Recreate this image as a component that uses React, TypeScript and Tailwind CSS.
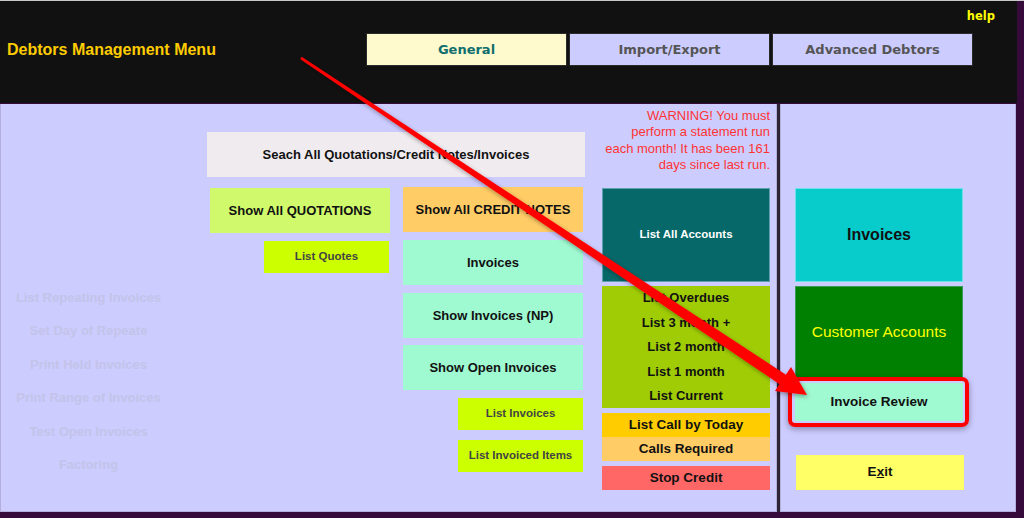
import React from "react";

const sans = { fontFamily: '"Liberation Sans", Arial, sans-serif' };
const dv = { fontFamily: '"DejaVu Sans", Verdana, sans-serif' };

function Btn({
  className,
  children,
}: {
  className: string;
  children: React.ReactNode;
}) {
  return (
    <div className={"flex items-center justify-center text-center " + className}>
      {children}
    </div>
  );
}

export default function App() {
  const faded = [
    "List Repeating Invoices",
    "Set Day of Repeate",
    "Print Held Invoices",
    "Print Range of Invoices",
    "Test Open Invoices",
    "Factoring",
  ];
  const overdue = ["List Overdues", "List 3 month +", "List 2 month", "List 1 month", "List Current"];
  return (
    <div className="relative w-[1024px] h-[518px] bg-[#360b3b] overflow-hidden" style={sans}>
      <div className="h-px w-full bg-[#c8c8c8]" />
      {/* Header */}
      <div className="w-[1017px] h-[102px] bg-[#111111] flex flex-col">
        <div className="h-[32px] flex items-center justify-end pr-[22px]">
          <span className="text-[11.5px] font-bold text-[#ffff00]" style={dv}>
            help
          </span>
        </div>
        <div className="flex items-center h-[33px]">
          <div className="w-[366px] pl-[7px] text-[16px] font-bold text-[#ffcc00] leading-none">
            Debtors Management Menu
          </div>
          <div className="flex gap-[2px]" style={dv}>
            <div className="w-[201px] h-[33px] flex items-center justify-center bg-[#fffacd] border border-[#2a2a2a] text-[13px] font-bold text-[#106e6e]">
              General
            </div>
            <div className="w-[201px] h-[33px] flex items-center justify-center bg-[#ccccff] border border-[#2a2a2a] text-[13px] font-bold text-[#555555]">
              Import/Export
            </div>
            <div className="w-[201px] h-[33px] flex items-center justify-center bg-[#ccccff] border border-[#2a2a2a] text-[13px] font-bold text-[#555555]">
              Advanced Debtors
            </div>
          </div>
        </div>
      </div>
      {/* Body */}
      <div className="flex mt-px h-[408px]">
        {/* Left panel */}
        <div className="w-[777px] h-full bg-[#ccccff] border-l border-r border-b border-[#b3aedb] flex items-start">
          <div className="w-[175px] pt-[177px] flex flex-col items-center">
            {faded.map((t) => (
              <div key={t} className="h-[33.4px] flex items-center text-[13px] font-bold text-[#c4c3e9] whitespace-nowrap">
                {t}
              </div>
            ))}
          </div>
          <div className="ml-[31px] w-[378px] pt-[28px] flex flex-col">
            <Btn className="h-[45px] w-full bg-[#efebef] text-[13px] font-bold text-[#111]">
              Seach All Quotations/Credit Notes/Invoices
            </Btn>
            <div className="flex">
              <div className="ml-[3px] w-[180px] flex flex-col items-end">
                <Btn className="mt-[11px] h-[45px] w-full bg-[#d0fa6c] text-[13px] font-bold text-[#111]">
                  Show All QUOTATIONS
                </Btn>
                <Btn className="mt-[8px] mr-[1px] h-[32px] w-[125px] bg-[#ccff00] text-[11.5px] font-bold text-[#444]">
                  List Quotes
                </Btn>
              </div>
              <div className="ml-[13px] w-[180px] flex flex-col items-end">
                <Btn className="mt-[10px] h-[45px] w-full bg-[#ffcc66] text-[13px] font-bold text-[#111]">
                  Show All CREDIT NOTES
                </Btn>
                <Btn className="mt-[8px] h-[45px] w-full bg-[#9ff9d1] text-[13px] font-bold text-[#111]">
                  Invoices
                </Btn>
                <Btn className="mt-[8px] h-[45px] w-full bg-[#9ff9d1] text-[13px] font-bold text-[#111]">
                  Show Invoices (NP)
                </Btn>
                <Btn className="mt-[7px] h-[45px] w-full bg-[#9ff9d1] text-[13px] font-bold text-[#111]">
                  Show Open Invoices
                </Btn>
                <Btn className="mt-[8px] h-[32px] w-[125px] bg-[#ccff00] text-[11.5px] font-bold text-[#444]">
                  List Invoices
                </Btn>
                <Btn className="mt-[10px] h-[32px] w-[125px] bg-[#ccff00] text-[11.5px] font-bold text-[#444]">
                  List Invoiced Items
                </Btn>
              </div>
            </div>
          </div>
          <div className="ml-[17px] w-[168px] pt-[4px] flex flex-col">
            <div className="h-[80px] text-right text-[13px] leading-[16.4px] text-[#ff3333] whitespace-nowrap">
              WARNING! You must
              <br />
              perform a statement run
              <br />
              each month! It has been 161
              <br />
              days since last run.
            </div>
            <Btn className="h-[94px] w-full bg-[#066868] border border-[#5f9fae] text-[11.5px] font-bold text-white">
              List All Accounts
            </Btn>
            <div className="mt-[4px] h-[122px] w-full bg-[#a0cc06] flex flex-col items-center">
              {overdue.map((t) => (
                <div key={t} className="h-[24.4px] flex items-center text-[13px] font-bold text-[#111]">
                  {t}
                </div>
              ))}
            </div>
            <Btn className="mt-[5px] h-[24px] w-full bg-[#ffcc00] text-[13.5px] font-bold text-[#111]">
              List Call by Today
            </Btn>
            <Btn className="h-[24px] w-full bg-[#ffcc66] text-[13.5px] font-bold text-[#111]">
              Calls Required
            </Btn>
            <Btn className="mt-[5px] h-[24px] w-full bg-[#ff6666] text-[13.5px] font-bold text-[#111]">
              Stop Credit
            </Btn>
          </div>
        </div>
        {/* Divider */}
        <div className="w-[3px] h-full bg-[#2d2433]" />
        {/* Right panel */}
        <div className="w-[236px] h-full bg-[#ccccff] border-l border-r border-b border-[#b3aedb] pl-[14px] pt-[84px] flex flex-col">
          <Btn className="w-[168px] h-[94px] bg-[#08cccc] border border-[#6fe0e8] text-[16px] font-bold text-[#111]">
            Invoices
          </Btn>
          <Btn className="mt-[4px] w-[168px] h-[92px] bg-[#008000] border border-[#3a9a5a] text-[15.5px] text-[#ffff00]">
            Customer Accounts
          </Btn>
          <div className="relative mt-[5px] w-[168px] h-[38px]">
            <Btn className="w-full h-full bg-[#9ff9d1] text-[13.5px] font-bold text-[#111]">
              Invoice Review
            </Btn>
            <div className="absolute -left-[7px] -right-[6px] -top-[6px] -bottom-[6px] border-4 border-[#ff0000] rounded-[7px] shadow-[0_2px_6px_rgba(0,0,0,0.35)]" />
          </div>
          <Btn className="mt-[34px] ml-[1px] w-[168px] h-[35px] bg-[#ffff66] text-[13.5px] font-bold text-[#111]">
            <span>
              E<span className="underline">x</span>it
            </span>
          </Btn>
        </div>
      </div>
      {/* Arrow overlay */}
      <svg className="absolute left-0 top-0 pointer-events-none" width="1024" height="518">
        <defs>
          <filter id="sh" x="-10%" y="-10%" width="120%" height="120%">
            <feDropShadow dx="1" dy="2" stdDeviation="2" floodColor="#000" floodOpacity="0.35" />
          </filter>
        </defs>
        <g filter="url(#sh)" fill="#ff0000">
          <polygon points="300.4,59.2 301.6,56.8 786.7,375.3 780.3,384.7" />
          <polygon points="807,395 775,391 791,367" />
        </g>
      </svg>
    </div>
  );
}
